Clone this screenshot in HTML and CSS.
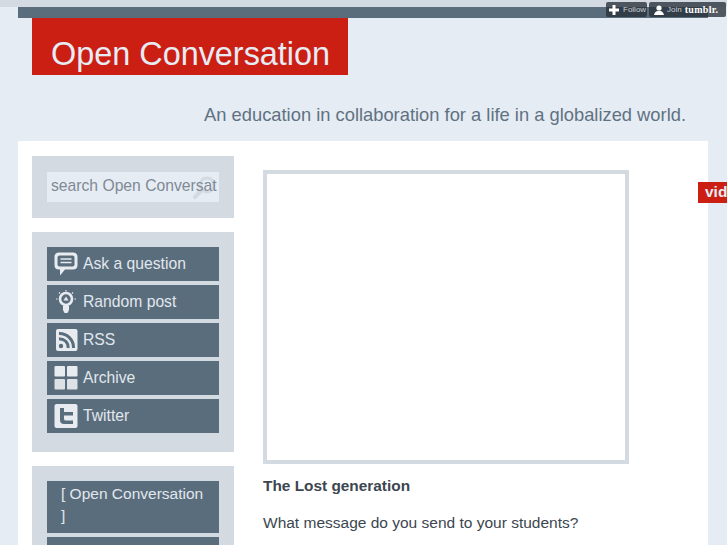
FILE: index.html
```html
<!DOCTYPE html>
<html lang="en">
<head>
    <meta charset="UTF-8">
    <meta name="viewport" content="width=device-width, initial-scale=1.0">
    <title>Open Conversation</title>
    <link rel="stylesheet" href="styles.css">
</head>
<body>
    <div class="top-strip"></div>
    <div class="wrapper">
        <div class="top-bar"></div>
        <header class="header">
            <h1 class="site-title">Open Conversation</h1>
            <p class="site-desc">An education in collaboration for a life in a globalized world.</p>
        </header>
        <div class="content">
            <aside class="sidebar">
                <div class="panel panel-search">
                    <div class="search-box">
                        <svg class="search-icon" viewBox="0 0 26 26" width="26" height="26">
                            <circle cx="16" cy="10" r="7" fill="none" stroke="#d3dae2" stroke-width="3"/>
                            <path d="M11 15 L4 22" stroke="#d3dae2" stroke-width="4" stroke-linecap="round"/>
                        </svg>
                        <span class="search-text">search Open Conversat</span>
                    </div>
                </div>
                <nav class="panel panel-nav">
                    <a class="nav-item" href="#">
                        <svg class="nav-icon" viewBox="0 0 24 24" width="24" height="24">
                            <path d="M5 0.5 H19 Q23.5 0.5 23.5 5 V13 Q23.5 17.5 19 17.5 H11 L6 23.5 V17.5 H5 Q0.5 17.5 0.5 13 V5 Q0.5 0.5 5 0.5 Z" fill="#e8ecf0"/>
                            <rect x="3.5" y="3.5" width="17" height="11" rx="2" fill="#5a6d7c"/>
                            <path d="M6.5 7 H17.5 M6.5 10.5 H17.5" stroke="#e8ecf0" stroke-width="1.5"/>
                        </svg>
                        Ask a question
                    </a>
                    <a class="nav-item" href="#">
                        <svg class="nav-icon" viewBox="0 0 24 24" width="24" height="24">
                            <circle cx="12" cy="9" r="6" fill="none" stroke="#e8ecf0" stroke-width="2.6"/>
                            <path d="M12 6.5 L9.5 10.5 H14.5 Z" fill="#e8ecf0"/>
                            <path d="M9 16 H15 V20 L13.5 23 H10.5 L9 20 Z" fill="#e8ecf0"/>
                            <path d="M12 0 V1.5 M3.5 9 H2 M20.5 9 H22 M5 2.5 L6 3.5 M19 2.5 L18 3.5" stroke="#e8ecf0" stroke-width="1.2"/>
                        </svg>
                        Random post
                    </a>
                    <a class="nav-item" href="#">
                        <svg class="nav-icon" viewBox="0 0 24 24" width="24" height="24">
                            <rect x="2" y="1" width="21.5" height="22" rx="2" fill="#e8ecf0"/>
                            <circle cx="7" cy="18" r="2.2" fill="#5a6d7c"/>
                            <path d="M5 11 A8 8 0 0 1 14 20 M5 5.5 A14 14 0 0 1 19.5 20" fill="none" stroke="#5a6d7c" stroke-width="3"/>
                        </svg>
                        RSS
                    </a>
                    <a class="nav-item" href="#">
                        <svg class="nav-icon" viewBox="0 0 24 24" width="24" height="24">
                            <rect x="0.5" y="0" width="10.5" height="10.5" rx="1" fill="#e8ecf0"/>
                            <rect x="13" y="0" width="10.5" height="10.5" rx="1" fill="#e8ecf0"/>
                            <rect x="0.5" y="13" width="10.5" height="10.5" rx="1" fill="#dde2e7"/>
                            <rect x="13" y="13" width="10.5" height="10.5" rx="1" fill="#dde2e7"/>
                        </svg>
                        Archive
                    </a>
                    <a class="nav-item" href="#">
                        <svg class="nav-icon" viewBox="0 0 24 24" width="24" height="24">
                            <rect x="0.5" y="0" width="23" height="24" rx="2" fill="#e8ecf0"/>
                            <path d="M6 4 H10 V8 H19 V11.5 H10 V15 Q10 16.5 12 16.5 H19 V20 H10 Q6 20 6 16 Z" fill="#5a6d7c"/>
                        </svg>
                        Twitter
                    </a>
                </nav>
                <nav class="panel panel-pages">
                    <a class="nav-item nav-item-page" href="#">[ Open Conversation ]</a>
                    <a class="nav-item nav-item-page" href="#"></a>
                </nav>
            </aside>
            <main class="main">
                <div class="video-frame"></div>
                <h2 class="post-title">The Lost generation</h2>
                <p class="post-text">What message do you send to your students?</p>
            </main>
        </div>
    </div>

    <!-- tumblr controls and the tag sit over the page -->
    <div class="controls">
        <a class="control control-follow" href="#">
            <svg viewBox="0 0 10 10" width="10" height="10"><path d="M3.5 0 H6.5 V3.5 H10 V6.5 H6.5 V10 H3.5 V6.5 H0 V3.5 H3.5 Z" fill="#fff"/></svg>
            Follow
        </a>
        <a class="control control-join" href="#">
            <svg viewBox="0 0 10 10" width="10" height="10"><circle cx="5" cy="3" r="2.6" fill="#fff"/><path d="M0 10 Q1 6 4 6 H6 Q9 6 10 10 Z" fill="#fff"/></svg>
            Join <b class="control-brand">tumblr.</b>
        </a>
    </div>
    <div class="side-tag">vid</div>
</body>
</html>
```

FILE: styles.css
```css
/* Basic Reset */
* {
    margin: 0;
    padding: 0;
    box-sizing: border-box;
}

html, body {
    height: 100%;
    overflow: hidden;
}

body {
    font-family: 'Liberation Sans', Arial, sans-serif;
    background-color: #e6ecf4;
    color: #3c4650;
    position: relative;
}

a {
    text-decoration: none;
}

.top-strip {
    height: 7px;
    background-color: #d3dae2;
}

.wrapper {
    width: 690px;
    margin-left: 18px;
}

.top-bar {
    height: 11px;
    background-color: #5a6d7c;
}

/* Header */
.header {
    height: 123px;
    padding-left: 14px;
}

.site-title {
    width: 316px;
    height: 57px;
    padding: 16px 0 0 19px;
    background-color: #cc1f14;
    color: #e6ecf4;
    font-size: 32.4px;
    font-weight: normal;
    line-height: 40px;
}

.site-desc {
    margin-top: 28px;
    padding-right: 22px;
    text-align: right;
    color: #5f7282;
    font-size: 18.34px;
    line-height: 24px;
}

/* Content */
.content {
    display: flex;
    background-color: #ffffff;
    padding: 15px 14px 0;
    height: 404px;
    overflow: hidden;
}

.sidebar {
    width: 202px;
    flex-shrink: 0;
}

.panel {
    background-color: #d3dae2;
    padding: 15px;
    margin-bottom: 14px;
}

.panel-search {
    padding: 16px 15px;
}

.search-box {
    position: relative;
    height: 30px;
    background-color: #e6ecf4;
    padding-left: 4px;
    overflow: hidden;
    white-space: nowrap;
    color: #7f8a94;
    font-size: 15.7px;
    line-height: 28px;
}

.search-text {
    position: relative;
}

.search-icon {
    position: absolute;
    top: 3px;
    right: 2px;
}

.panel-nav {
    height: 220px;
}

.nav-item {
    display: flex;
    align-items: center;
    gap: 5px;
    height: 34px;
    margin-bottom: 4px;
    padding-left: 7px;
    background-color: #5a6d7c;
    color: #e1e7ee;
    font-size: 15.7px;
}

.nav-icon {
    flex-shrink: 0;
}

.nav-item-page {
    display: block;
    height: auto;
    min-height: 34px;
    padding: 2px 10px 6px 14px;
    line-height: 22px;
    font-size: 15.5px;
}

/* Main column */
.main {
    flex: 1;
    padding: 14px 0 0 29px;
}

.video-frame {
    width: 366px;
    height: 294px;
    border: 4px solid #d3dae2;
}

.post-title {
    margin-top: 13px;
    font-size: 15.4px;
    line-height: 18px;
    font-weight: bold;
}

.post-text {
    margin-top: 19px;
    font-size: 15.5px;
    line-height: 18px;
}

/* Overlays */
.controls {
    position: absolute;
    top: 2px;
    left: 606px;
    display: flex;
    gap: 2px;
}

.control {
    display: flex;
    align-items: center;
    height: 15px;
    border-radius: 2px;
    background-color: rgba(40, 48, 56, 0.78);
    color: #c9d0d6;
    font-size: 8px;
    gap: 4px;
    padding-left: 3px;
    white-space: nowrap;
}

.control-follow {
    width: 41px;
}

.control-join {
    width: 77px;
    padding-left: 5px;
    gap: 3px;
}

.control-brand {
    color: #ffffff;
    font-family: 'Liberation Serif', serif;
    font-size: 10px;
    letter-spacing: 0.3px;
}

.side-tag {
    position: absolute;
    top: 182px;
    left: 698px;
    width: 29px;
    height: 21px;
    padding-left: 7px;
    overflow: hidden;
    background-color: #cc1f14;
    color: #e6ecf4;
    font-size: 15.5px;
    font-weight: bold;
    line-height: 20px;
}
```
